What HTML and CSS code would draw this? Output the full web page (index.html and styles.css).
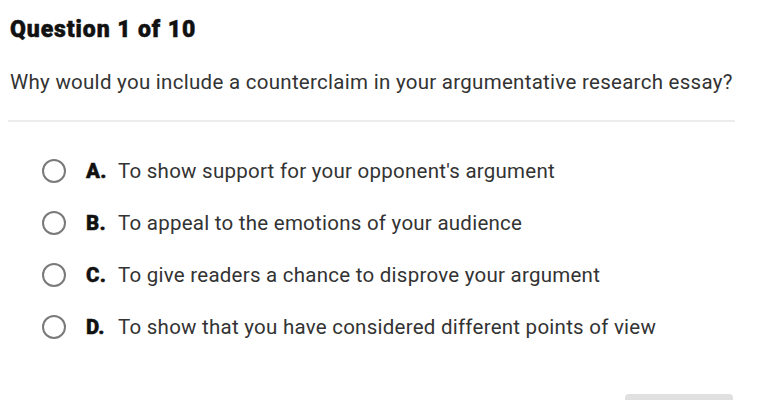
FILE: index.html
```html
<!DOCTYPE html>
<html>
<head>
<meta charset="utf-8">
<link rel="stylesheet" href="styles.css">
</head>
<body>
<div class="page">
  <h1 class="title">Question 1 of 10</h1>
  <p class="question">Why would you include a counterclaim in your argumentative research essay?</p>
  <hr class="divider">
  <ul class="options">
    <li class="option"><span class="radio"></span><span class="letter">A.</span><span class="text">To show support for your opponent's argument</span></li>
    <li class="option"><span class="radio"></span><span class="letter">B.</span><span class="text">To appeal to the emotions of your audience</span></li>
    <li class="option"><span class="radio"></span><span class="letter">C.</span><span class="text">To give readers a chance to disprove your argument</span></li>
    <li class="option"><span class="radio"></span><span class="letter">D.</span><span class="text">To show that you have considered different points of view</span></li>
  </ul>
  <div class="footer"><button class="submit"></button></div>
</div>
</body>
</html>
```
FILE: styles.css
```css
html, body { margin: 0; padding: 0; background: #fff; overflow: hidden; }
body { font-family: Roboto, "Liberation Sans", sans-serif; color: #333; }
.page { padding: 16px 37px 0 10px; width: 725px; }
.title { margin: 0; font-size: 23px; font-weight: 900; color: #111; line-height: 28px; letter-spacing: 0.9px; -webkit-text-stroke: 0.5px #111; }
.question { margin: 25px 0 0; font-size: 20.5px; line-height: 26px; color: #333; letter-spacing: 0.28px; white-space: nowrap; }
.divider { margin: 25px 0 0 -2px; border: none; height: 2px; background: #ececec; }
.options { list-style: none; margin: 37px 0 0; padding: 0 0 0 32px; display: flex; flex-direction: column; gap: 28px; }
.option { display: flex; align-items: center; height: 24px; font-size: 20.5px; letter-spacing: 0.25px; }
.radio { width: 20px; height: 20px; border: 2px solid #7a7a7a; border-radius: 50%; flex: none; }
.letter { font-weight: 900; color: #111; margin-left: 20px; width: 32px; -webkit-text-stroke: 0.4px #111; }
.text { color: #333; }
.footer { display: flex; justify-content: flex-end; margin-top: 55px; padding-right: 2px; }
.submit { width: 108px; height: 30px; border: none; border-radius: 4px; background: #e0e0e0; }
```
